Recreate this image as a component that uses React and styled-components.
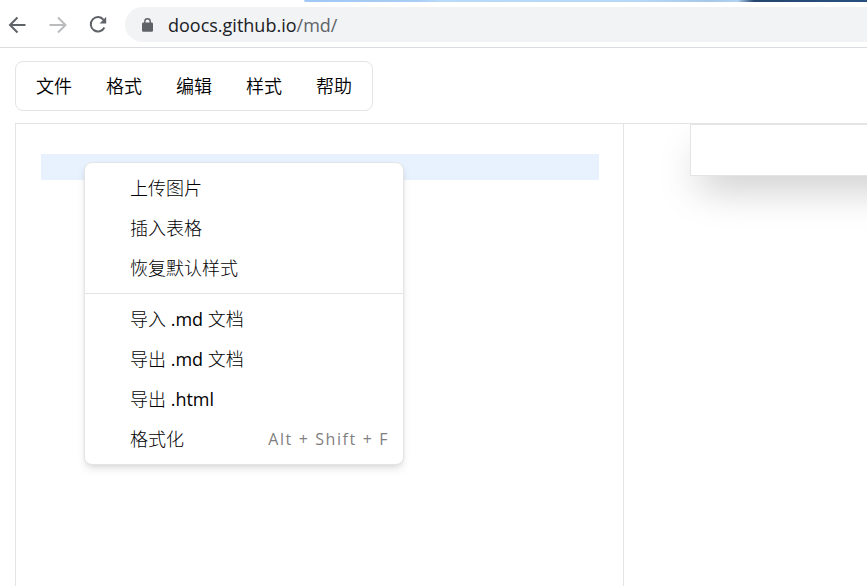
import React from "react";
import styled, { createGlobalStyle } from "styled-components";

const GlobalStyle = createGlobalStyle`
  *, *::before, *::after { box-sizing: border-box; }
  html, body, #root { height: 100%; }
  body {
    margin: 0;
    overflow: hidden;
    background: #fff;
    color: #0a0a0a;
    font-family: "Open Sans", "Noto Sans CJK SC", sans-serif;
    font-size: 18px;
    line-height: 24px;
  }
  button, input { font: inherit; color: inherit; }
`;

const Page = styled.div`
  display: flex;
  flex-direction: column;
  height: 100%;
`;

const BrowserBar = styled.header`
  flex: none;
  border-bottom: 1px solid #dadce0;
`;

const WindowEdge = styled.div`
  height: 2px;
  margin-left: 304px;
  border-bottom-left-radius: 4px;
  background: linear-gradient(90deg, #a0c8f4 0%, #a8cdf5 20%, #b9dbfa 24%, #b5d8f8 60%, #a6c8e8 72%, #b1d3f3 77%, #24466f 80%, #28507f 100%);
`;

const Toolbar = styled.div`
  display: flex;
  align-items: center;
  height: 45px;
  padding-left: 6px;
  gap: 16px;
`;

const NavButton = styled.button`
  display: grid;
  place-items: center;
  width: 24px;
  height: 24px;
  padding: 0;
  border: 0;
  background: none;
  color: ${(p) => (p.disabled ? "#babcbe" : "#5f6368")};
`;

const AddressBar = styled.div`
  flex: 1;
  display: flex;
  align-items: center;
  gap: 14px;
  height: 35px;
  margin-left: -1px;
  padding-left: 16px;
  border-radius: 18px 0 0 18px;
  background: #f1f3f4;
`;

const Address = styled.a`
  color: #5f6368;
  text-decoration: none;
`;

const Host = styled.span`
  color: #202124;
`;

const Workspace = styled.main`
  flex: 1;
  min-height: 0;
  display: flex;
  flex-direction: column;
  align-items: flex-start;
  gap: 12px;
  padding: 13px 0 0 15px;
`;

const Menubar = styled.nav`
  display: flex;
  padding: 3px;
  border: 1px solid #e4e4e7;
  border-radius: 8px;
`;

const MenuTrigger = styled.button`
  height: 42px;
  padding: 0 17px;
  border: 0;
  background: none;
  color: #000;
  font-weight: 350;
`;

const Panes = styled.div`
  flex: 1;
  align-self: stretch;
  min-height: 0;
  display: grid;
  grid-template-columns: 5fr 2fr;
  border-top: 1px solid #e4e4e7;
`;

const EditorPane = styled.section`
  position: relative;
  padding: 30px 24px 0 25px;
  border: solid #e4e4e7;
  border-width: 0 1px;
`;

const ActiveLine = styled.div`
  height: 26px;
  background: #e8f2ff;
`;

const PreviewPane = styled.section`
  overflow: hidden;
  padding-left: 66px;
`;

const PreviewCard = styled.div`
  height: 52px;
  margin-right: -64px;
  border: 1px solid #e4e4e7;
  background: #fff;
  box-shadow: 0 20px 40px -10px rgba(0, 0, 0, 0.25);
`;

const ContextMenu = styled.div`
  position: absolute;
  top: 38px;
  left: 68px;
  width: 320px;
  padding: 5px 0;
  border: 1px solid #e4e4e7;
  border-radius: 8px;
  background: #fff;
  box-shadow: 0 5px 8px -1px rgba(0, 0, 0, 0.1), 0 2px 5px -2px rgba(0, 0, 0, 0.1);
`;

const MenuItem = styled.button`
  display: flex;
  align-items: center;
  justify-content: space-between;
  width: 100%;
  height: 40px;
  padding: 0 14px 0 45px;
  border: 0;
  background: none;
  font-weight: 300;
  text-align: left;
`;

const Label = styled.span`
  color: #000;
`;

const Extension = styled.span`
  font-weight: 400;
`;

const Shortcut = styled.kbd`
  color: #7f7f7f;
  font-family: inherit;
  font-size: 16px;
  font-weight: 400;
  letter-spacing: 0.1em;
`;

const Separator = styled.hr`
  height: 1px;
  margin: 5px 0;
  border: 0;
  background: #e4e4e7;
`;

const menus = ["文件", "格式", "编辑", "样式", "帮助"];

const contextGroups = [
  [
    { id: "upload", label: "上传图片" },
    { id: "table", label: "插入表格" },
    { id: "reset", label: "恢复默认样式" },
  ],
  [
    { id: "import-md", label: <>导入 <Extension>.md</Extension> 文档</> },
    { id: "export-md", label: <>导出 <Extension>.md</Extension> 文档</> },
    { id: "export-html", label: <>导出 <Extension>.html</Extension></> },
    { id: "format", label: "格式化", shortcut: "Alt + Shift + F" },
  ],
];

function ArrowIcon({ forward }) {
  return (
    <svg width="24" height="24" viewBox="0 0 24 24" fill="none" stroke="currentColor" strokeWidth="2" aria-hidden="true">
      <path d={forward ? "M3.5 12H19M12 4.5 19.5 12 12 19.5" : "M19.5 12H4M11.5 4.5 4 12 11.5 19.5"} />
    </svg>
  );
}

function ReloadIcon() {
  return (
    <svg width="24" height="24" viewBox="0 0 24 24" aria-hidden="true">
      <path d="M17.6 6.8A7.2 7.2 0 1 0 18.4 14.5" fill="none" stroke="currentColor" strokeWidth="2" />
      <path d="M20.2 3.8v6.6h-6.6z" fill="currentColor" />
    </svg>
  );
}

function LockIcon() {
  return (
    <svg width="13" height="16" viewBox="0 0 13 16" aria-hidden="true">
      <path d="M3.8 7V4.4a2.7 2.7 0 0 1 5.4 0V7" fill="none" stroke="#5f6368" strokeWidth="1.4" />
      <rect x="1" y="5.5" width="11" height="9.3" rx="1.2" fill="#5f6368" />
    </svg>
  );
}

export default function App() {
  return (
    <>
      <GlobalStyle />
      <Page>
        <BrowserBar>
          <WindowEdge />
          <Toolbar>
            <NavButton aria-label="Back"><ArrowIcon /></NavButton>
            <NavButton aria-label="Forward" disabled><ArrowIcon forward /></NavButton>
            <NavButton aria-label="Reload"><ReloadIcon /></NavButton>
            <AddressBar>
              <LockIcon />
              <Address href="#"><Host>doocs.github.io</Host>/md/</Address>
            </AddressBar>
          </Toolbar>
        </BrowserBar>
        <Workspace>
          <Menubar>
            {menus.map((name) => <MenuTrigger key={name}>{name}</MenuTrigger>)}
          </Menubar>
          <Panes>
            <EditorPane>
              <ActiveLine />
              <ContextMenu role="menu">
                {contextGroups.map((items, index) => (
                  <React.Fragment key={index}>
                    {index > 0 && <Separator />}
                    {items.map((item) => (
                      <MenuItem key={item.id} role="menuitem">
                        <Label>{item.label}</Label>
                        {item.shortcut && <Shortcut>{item.shortcut}</Shortcut>}
                      </MenuItem>
                    ))}
                  </React.Fragment>
                ))}
              </ContextMenu>
            </EditorPane>
            <PreviewPane>
              <PreviewCard />
            </PreviewPane>
          </Panes>
        </Workspace>
      </Page>
    </>
  );
}
